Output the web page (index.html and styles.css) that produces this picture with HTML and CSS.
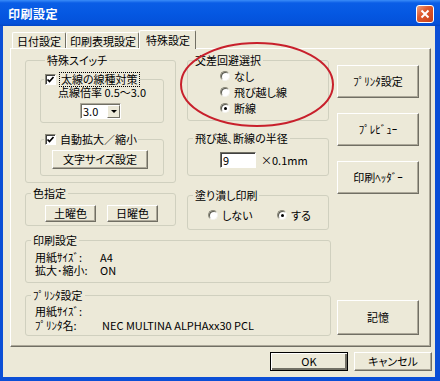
FILE: index.html
```html
<!DOCTYPE html>
<html lang="ja">

<head>
    <meta charset="UTF-8">
    <meta name="viewport" content="width=device-width, initial-scale=1.0">
    <title>印刷設定</title>
    <link rel="stylesheet" href="styles.css">
</head>

<body>
    <div class="window">
        <div class="titlebar">
            <span class="title">印刷設定</span>
            <span class="close">
                <svg width="10" height="10" viewBox="0 0 10 10"><path d="M1.5 1.5L8.5 8.5M8.5 1.5L1.5 8.5" stroke="#fff" stroke-width="2"/></svg>
            </span>
        </div>

        <div class="client">
            <!-- タブ -->
            <div class="tabs">
                <div class="tab tab-date">日付設定</div>
                <div class="tab tab-print">印刷表現設定</div>
                <div class="tab active">特殊設定</div>
            </div>

            <div class="panel">
                <div class="top-row">
                    <div class="col-left">
                        <div class="group sw">
                            <span class="group-title">特殊スイッチ</span>
                            <div class="group inner inner-line">
                                <span class="group-title check-title">
                                    <span class="check"><svg width="9" height="9" viewBox="0 0 9 9"><path d="M1.5 4.5L3.5 6.5L7.5 2" fill="none" stroke="#000" stroke-width="1.7"/></svg></span>
                                    <span class="focus">太線の線種対策</span>
                                </span>
                                <div class="line-text">点線倍率 0.5～3.0</div>
                                <div class="combo">
                                    <span class="combo-val">3.0</span>
                                    <span class="combo-btn"><i></i></span>
                                </div>
                            </div>
                            <div class="group inner inner-zoom">
                                <span class="group-title check-title">
                                    <span class="check"><svg width="9" height="9" viewBox="0 0 9 9"><path d="M1.5 4.5L3.5 6.5L7.5 2" fill="none" stroke="#000" stroke-width="1.7"/></svg></span>
                                    <span class="label">自動拡大／縮小</span>
                                </span>
                                <button class="btn btn-font">文字サイズ設定</button>
                            </div>
                        </div>

                        <div class="group color">
                            <span class="group-title">色指定</span>
                            <div class="color-btns">
                                <button class="btn btn-day">土曜色</button>
                                <button class="btn btn-day">日曜色</button>
                            </div>
                        </div>
                    </div>

                    <div class="col-mid">
                        <div class="group cross">
                            <span class="group-title">交差回避選択</span>
                            <div class="radio-list">
                                <div class="radio-row"><span class="radio"></span>なし</div>
                                <div class="radio-row"><span class="radio"></span>飛び越し線</div>
                                <div class="radio-row"><span class="radio on"></span>断線</div>
                            </div>
                        </div>

                        <div class="group radius">
                            <span class="group-title">飛び越､断線の半径</span>
                            <div class="radius-row">
                                <span class="textbox">9</span>
                                <span>×0.1mm</span>
                            </div>
                        </div>

                        <div class="group fill">
                            <span class="group-title">塗り潰し印刷</span>
                            <div class="fill-row">
                                <div class="radio-row fill-off"><span class="radio"></span>しない</div>
                                <div class="radio-row"><span class="radio on"></span>する</div>
                            </div>
                        </div>
                    </div>

                    <div class="col-right">
                        <button class="btn btn-side">ﾌﾟﾘﾝﾀ設定</button>
                        <button class="btn btn-side">ﾌﾟﾚﾋﾞｭｰ</button>
                        <button class="btn btn-side">印刷ﾍｯﾀﾞｰ</button>
                    </div>
                </div>

                <div class="group info print-info">
                    <span class="group-title">印刷設定</span>
                    <div class="info-grid">
                        <span>用紙ｻｲｽﾞ:</span><span>A4</span>
                        <span>拡大･縮小:</span><span>ON</span>
                    </div>
                </div>

                <div class="bottom-row">
                    <div class="group info printer-info">
                        <span class="group-title">ﾌﾟﾘﾝﾀ設定</span>
                        <div class="info-grid">
                            <span>用紙ｻｲｽﾞ:</span><span></span>
                            <span>ﾌﾟﾘﾝﾀ名:</span><span>NEC MULTINA ALPHAxx30 PCL</span>
                        </div>
                    </div>
                    <button class="btn btn-side btn-save">記憶</button>
                </div>
            </div>

            <div class="footer">
                <button class="btn btn-foot btn-ok">OK</button>
                <button class="btn btn-foot">キャンセル</button>
            </div>
        </div>

        <!-- 赤丸の注記 -->
        <svg class="mark" width="440" height="381" viewBox="0 0 440 381">
            <ellipse cx="257" cy="84.5" rx="76" ry="41.5" fill="none" stroke="#c8202c" stroke-width="2"/>
        </svg>
    </div>
</body>

</html>
```

FILE: styles.css
```css
/* styles.css */
body {
    margin: 0;
    font-family: "Noto Sans CJK JP", sans-serif;
    font-size: 11px;
    line-height: 13px;
    font-feature-settings: "palt";
    color: #000;
}

.window {
    position: relative;
    width: 440px;
    height: 381px;
    background: #0b4fd6;
    display: flex;
    flex-direction: column;
}

.titlebar {
    height: 26px;
    display: flex;
    align-items: center;
    justify-content: space-between;
    padding: 0 6px 0 8px;
    background: linear-gradient(#3a8cf8 0, #0a5de6 3px, #0558e2 50%, #0451da 90%, #0346c6 100%);
    box-sizing: border-box;
}

.title {
    color: #fff;
    font-weight: bold;
    font-size: 12px;
    letter-spacing: 0.5px;
}

.close {
    width: 18px;
    height: 18px;
    margin-top: 2px;
    box-sizing: border-box;
    border: 1px solid #fff;
    border-radius: 3px;
    background: linear-gradient(135deg, #f0a080 0, #df5a2e 40%, #c7401a 100%);
    display: flex;
    align-items: center;
    justify-content: center;
}

.client {
    flex: 1;
    margin: 0 5px 4px 3px;
    background: #ece9d8;
    display: flex;
    flex-direction: column;
}

/* tabs */
.tabs {
    height: 22px;
    display: flex;
    align-items: flex-end;
    padding-left: 9px;
}

.tab {
    height: 16px;
    box-sizing: border-box;
    padding: 2px 4px 0 4px;
    border-top: 1px solid #fff;
    border-left: 1px solid #fff;
    border-right: 1px solid #716f64;
    border-radius: 2px 2px 0 0;
    white-space: nowrap;
}

.tab-print {
    padding: 2px 2px 0 3px;
}

.tab.active {
    position: relative;
    z-index: 1;
    height: 19px;
    margin-bottom: -1px;
    padding: 3px 5px 0 6px;
    background: #ece9d8;
}

.panel {
    height: 299px;
    box-sizing: border-box;
    margin: 0 4px 0 7px;
    padding: 11px 0 0 14px;
    border: 1px solid;
    border-color: #fff #716f64 #716f64 #fff;
    box-shadow: inset -1px -1px #aca899;
}

/* group boxes */
.group {
    border: 1px solid #d0d0bf;
    border-radius: 3px;
    box-sizing: border-box;
}

.group-title {
    display: block;
    width: fit-content;
    margin: -7px 0 0 5px;
    padding: 0 2px;
    background: #ece9d8;
    white-space: nowrap;
}

.check-title {
    display: flex;
    align-items: center;
    margin-left: 3px;
    padding: 0 1px;
}

.check {
    width: 11px;
    height: 11px;
    box-sizing: border-box;
    background: #fff;
    border: 1px solid;
    border-color: #8a8878 #fff #fff #8a8878;
    box-shadow: inset 1px 1px #404040;
    display: flex;
    align-items: center;
    justify-content: center;
    margin-right: 4px;
}

.focus {
    outline: 1px dotted #000;
    outline-offset: 0;
    padding: 0 1px;
}

.top-row {
    display: flex;
    align-items: flex-start;
}

.col-left {
    width: 151px;
}

.col-mid {
    width: 142px;
    margin-left: 11px;
}

.col-right {
    width: 82px;
    margin-left: 8px;
    display: flex;
    flex-direction: column;
}

.sw {
    height: 123px;
    padding: 0 11px 0 14px;
}

.inner {
    margin-top: 12px;
}

.inner-line {
    height: 44px;
    text-align: center;
}

.inner-zoom {
    height: 37px;
    margin-top: 16px;
    text-align: center;
}

.combo {
    display: flex;
    width: 41px;
    height: 16px;
    margin: 4px 0 0 39px;
    box-sizing: border-box;
    background: #fff;
    border: 1px solid;
    border-color: #aca899 #fff #fff #aca899;
    box-shadow: inset 1px 1px #716f64;
    text-align: left;
}

.combo-val {
    flex: 1;
    padding: 1px 0 0 2px;
}

.combo-btn {
    width: 13px;
    margin: 1px 0 0 0;
    box-sizing: border-box;
    background: #ece9d8;
    border: 1px solid;
    border-color: #fff #716f64 #716f64 #fff;
    display: flex;
    align-items: center;
    justify-content: center;
}

.combo-btn i {
    border-left: 3px solid transparent;
    border-right: 3px solid transparent;
    border-top: 3px solid #000;
}

/* buttons */
.btn {
    font: inherit;
    font-feature-settings: "palt";
    color: #000;
    background: #ece9d8;
    border: 1px solid;
    border-color: #fff #716f64 #716f64 #fff;
    box-shadow: inset -1px -1px #aca899;
    padding: 0;
    box-sizing: border-box;
}

.btn-font {
    display: block;
    width: 96px;
    height: 19px;
    margin: 4px 0 0 11px;
}

.color {
    height: 33px;
    margin-top: 10px;
}

.color-btns {
    display: flex;
    gap: 11px;
    margin: 5px 0 0 19px;
}

.btn-day {
    width: 51px;
    height: 17px;
}

.cross {
    height: 61px;
}

.radio-list {
    margin-top: 1px;
    padding-left: 32px;
}

.radio-row {
    height: 16px;
    display: flex;
    align-items: center;
    gap: 4px;
}

.radio {
    width: 10px;
    height: 10px;
    box-sizing: border-box;
    border-radius: 50%;
    background: #fff;
    border: 1px solid;
    border-color: #8a8878 #f4f3ee #f4f3ee #8a8878;
    box-shadow: inset 1px 1px #5a5a50;
    display: flex;
    align-items: center;
    justify-content: center;
}

.radio.on::after {
    content: "";
    width: 3px;
    height: 3px;
    border-radius: 50%;
    background: #000;
}

.radius {
    height: 38px;
    margin-top: 17px;
}

.radius-row {
    display: flex;
    align-items: center;
    gap: 5px;
    margin-top: 7px;
    padding-left: 32px;
}

.textbox {
    width: 36px;
    height: 16px;
    box-sizing: border-box;
    padding: 1px 0 0 2px;
    background: #fff;
    border: 1px solid;
    border-color: #716f64 #fff #fff #716f64;
    box-shadow: inset 1px 1px #404040;
}

.fill {
    height: 35px;
    margin-top: 19px;
}

.fill-row {
    display: flex;
    margin-top: 5px;
    padding-left: 20px;
}

.fill-off {
    width: 69px;
}

.btn-side {
    width: 82px;
    height: 33px;
    margin-top: 15px;
}

.btn-side:first-child {
    margin-top: 5px;
}

/* info groups */
.info {
    width: 306px;
}

.print-info {
    height: 43px;
    margin-top: 10px;
}

.info-grid {
    display: grid;
    grid-template-columns: 65px auto;
    margin-top: 4px;
    padding-left: 9px;
}

.bottom-row {
    display: flex;
    align-items: flex-start;
    margin-top: 12px;
}

.printer-info {
    height: 41px;
}

.printer-info .info-grid {
    grid-template-columns: 67px auto;
    grid-auto-rows: 14px;
    margin-top: 3px;
}

.btn-save {
    height: 35px;
    margin: 5px 0 0 6px;
}

.footer {
    display: flex;
    justify-content: flex-end;
    gap: 6px;
    margin-top: 5px;
    padding-right: 3px;
}

.btn-foot {
    width: 78px;
    height: 19px;
}

.btn-ok {
    border-color: #000;
    box-shadow: inset 1px 1px #fff, inset -2px -2px #716f64;
}

.mark {
    position: absolute;
    left: 0;
    top: 0;
    pointer-events: none;
}
```
